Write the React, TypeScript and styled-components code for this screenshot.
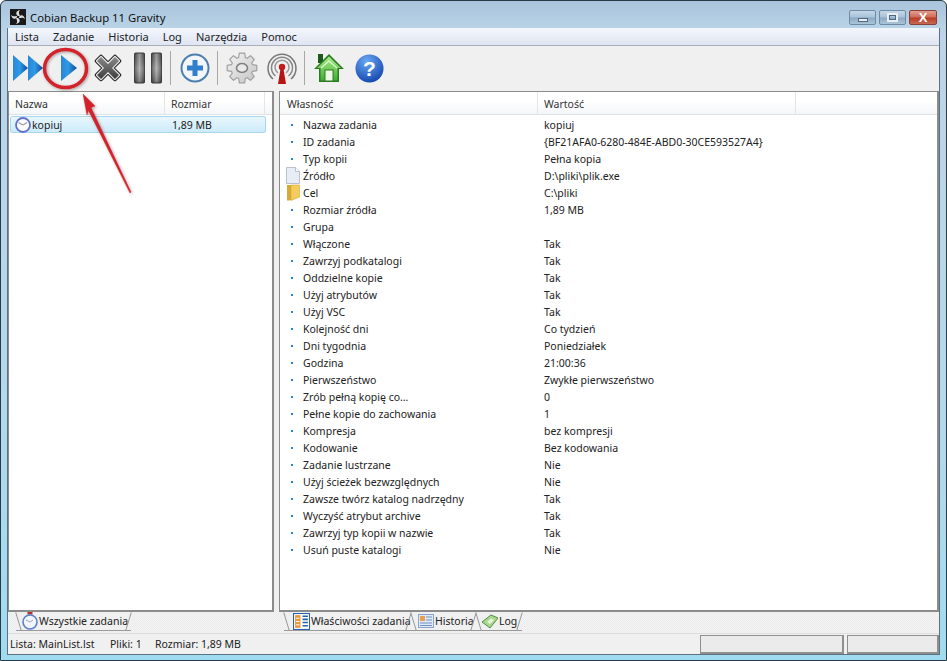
import React from 'react';
import styled, { createGlobalStyle } from 'styled-components';

const GlobalStyle = createGlobalStyle`
  html, body { margin: 0; padding: 0; height: 100%; background: #fff; }
  #root { height: 100%; }
  * { box-sizing: border-box; }
`;

type Row = { name: string; value: string; icon?: 'file' | 'folder' };

const rows: Row[] = [
  { name: 'Nazwa zadania', value: 'kopiuj' },
  { name: 'ID zadania', value: '{BF21AFA0-6280-484E-ABD0-30CE593527A4}' },
  { name: 'Typ kopii', value: 'Pełna kopia' },
  { name: 'Źródło', value: 'D:\\pliki\\plik.exe', icon: 'file' },
  { name: 'Cel', value: 'C:\\pliki', icon: 'folder' },
  { name: 'Rozmiar źródła', value: '1,89 MB' },
  { name: 'Grupa', value: '' },
  { name: 'Włączone', value: 'Tak' },
  { name: 'Zawrzyj podkatalogi', value: 'Tak' },
  { name: 'Oddzielne kopie', value: 'Tak' },
  { name: 'Użyj atrybutów', value: 'Tak' },
  { name: 'Użyj VSC', value: 'Tak' },
  { name: 'Kolejność dni', value: 'Co tydzień' },
  { name: 'Dni tygodnia', value: 'Poniedziałek' },
  { name: 'Godzina', value: '21:00:36' },
  { name: 'Pierwszeństwo', value: 'Zwykłe pierwszeństwo' },
  { name: 'Zrób pełną kopię co…', value: '0' },
  { name: 'Pełne kopie do zachowania', value: '1' },
  { name: 'Kompresja', value: 'bez kompresji' },
  { name: 'Kodowanie', value: 'Bez kodowania' },
  { name: 'Zadanie lustrzane', value: 'Nie' },
  { name: 'Użyj ścieżek bezwzględnych', value: 'Nie' },
  { name: 'Zawsze twórz katalog nadrzędny', value: 'Tak' },
  { name: 'Wyczyść atrybut archive', value: 'Tak' },
  { name: 'Zawrzyj typ kopii w nazwie', value: 'Tak' },
  { name: 'Usuń puste katalogi', value: 'Nie' },
];

const menuItems = ['Lista', 'Zadanie', 'Historia', 'Log', 'Narzędzia', 'Pomoc'];

const Frame = styled.div`
  position: relative;
  width: 947px;
  height: 661px;
  display: flex;
  flex-direction: column;
  overflow: hidden;
  border: 1px solid #2a3a44;
  border-radius: 6px 6px 0 0;
  background: linear-gradient(180deg, #a9c4dc 0%, #bcd5e8 5%, #b4d8ec 60%, #9fdcf0 100%);
  font-family: 'Noto Sans', 'DejaVu Sans', sans-serif;
  font-size: 10.5px;
  color: #222;
`;

const TitleBar = styled.div`
  height: 27px;
  flex: none;
  display: flex;
  align-items: center;
  padding: 4px 9px 0 9px;
`;

const TitleText = styled.span`
  margin: 1px 0 0 4px;
  font-size: 11.3px;
  color: #111;
  flex: 1;
`;

const WinButtons = styled.div`
  display: flex;
  gap: 3px;
  margin-top: 2px;
`;

const WinButton = styled.div<{ $close?: boolean }>`
  width: ${(p) => (p.$close ? 28 : 27)}px;
  height: 15px;
  display: flex;
  align-items: center;
  justify-content: center;
  border: 1px solid ${(p) => (p.$close ? '#8a4038' : '#6f8ba3')};
  border-radius: 2px;
  background: ${(p) =>
    p.$close
      ? 'linear-gradient(180deg, #e0a090 0%, #cf6a58 48%, #b83a28 52%, #c86a50 100%)'
      : 'linear-gradient(180deg, #c4d8e8 0%, #a8c2d8 48%, #8aa8c2 52%, #a9c6d8 100%)'};
`;

const MinGlyph = styled.span`
  width: 10px;
  height: 4px;
  margin-top: 4px;
  background: #e8eef4;
  border: 1px solid #51677c;
`;

const MaxGlyph = styled.span`
  width: 11px;
  height: 9px;
  background: transparent;
  border: 2px solid #e8eef4;
  outline: 1px solid #51677c;
  outline-offset: -3px;
`;

const CloseGlyph = styled.span`
  color: #fff;
  font-family: 'Liberation Sans', sans-serif;
  font-weight: bold;
  font-size: 13px;
  line-height: 13px;
`;

const Body = styled.div`
  flex: 1;
  min-height: 0;
  margin: 0 6px 5px 6px;
  display: flex;
  flex-direction: column;
  background: #f0f0f0;
  border: 1px solid #5e7182;
  border-width: 0 1px 1px 1px;
`;

const MenuBar = styled.div`
  height: 18px;
  flex: none;
  display: flex;
  align-items: center;
  padding-left: 7px;
  gap: 14px;
  font-size: 11px;
  background: linear-gradient(180deg, #f3f6fc 0%, #dfe5f2 100%);
  border-bottom: 1px solid #a9aeb8;
`;

const Toolbar = styled.div`
  height: 44px;
  flex: none;
  display: flex;
  align-items: center;
`;

const ToolSlot = styled.div`
  width: 40px;
  display: flex;
  justify-content: center;
  align-items: center;
`;

const ToolSep = styled.div`
  width: 1px;
  height: 34px;
  margin: 0 4px 0 2px;
  background: #a8a8a8;
`;

const Panels = styled.div`
  flex: 1;
  min-height: 0;
  display: flex;
  gap: 5px;
  margin-top: 1px;
`;

const Panel = styled.div<{ $w?: number }>`
  ${(p) => (p.$w ? `width: ${p.$w}px; flex: none;` : 'flex: 1;')}
  background: #fff;
  border-style: solid;
  border-width: 1px 2px 2px 1px;
  border-color: #8c8c8c;
  overflow: hidden;
`;

const HeaderRow = styled.div`
  height: 23px;
  display: flex;
  align-items: center;
  border-bottom: 1px solid #dfe3e8;
  background: linear-gradient(180deg, #fff 0%, #fff 40%, #f4f6f8 100%);
  color: #333;
`;

const HeaderCell = styled.div<{ $w: number; $pad: number }>`
  width: ${(p) => p.$w}px;
  flex: none;
  height: 100%;
  display: flex;
  align-items: center;
  padding: 2px 0 0 ${(p) => p.$pad}px;
  border-right: 1px solid #e2e5e9;
`;

const TaskRow = styled.div`
  display: flex;
  align-items: center;
  height: 17px;
  margin: 1px 6px 0 1px;
  border: 1px solid #a9d8ee;
  border-radius: 2px;
  background: linear-gradient(180deg, #e8f6fd 0%, #cdebfa 100%);
`;

const TaskIcon = styled.span`
  display: flex;
  margin-left: 4px;
`;

const TaskName = styled.span`
  width: 140px;
  margin-left: 1px;
`;

const PropList = styled.div`
  padding-top: 1px;
`;

const PropRow = styled.div`
  display: flex;
  align-items: center;
  height: 17px;
`;

const PropIcon = styled.div`
  width: 23px;
  flex: none;
  display: flex;
  justify-content: center;
  padding-left: 3px;
`;

const Bullet = styled.span`
  width: 2px;
  height: 2px;
  margin-right: 3px;
  background: #1f86c8;
`;

const PropName = styled.div`
  width: 241px;
  flex: none;
`;

const TabBar = styled.div`
  height: 20px;
  flex: none;
  display: flex;
  background: repeating-conic-gradient(#f4f4f4 0% 25%, #ebebeb 0% 50%) 0 0 / 2px 2px;
`;

const TabGroup = styled.div<{ $w?: number; $pad: number }>`
  ${(p) => (p.$w ? `width: ${p.$w}px; flex: none;` : 'flex: 1;')}
  display: flex;
  padding-left: ${(p) => p.$pad}px;
`;

const Tab = styled.div<{ $w: number; $pad: number }>`
  position: relative;
  width: ${(p) => p.$w}px;
  height: 19px;
  display: flex;
  align-items: center;
  gap: 1px;
  padding-left: ${(p) => p.$pad}px;
  white-space: nowrap;
  border-bottom: 1px solid #9a9a9a;
  background: #f0f0f0;
  &::before, &::after {
    content: '';
    position: absolute;
    top: 0;
    bottom: -1px;
    width: 1px;
    background: #9a9a9a;
  }
  &::before { left: 2px; transform: rotate(-17deg); }
  &::after { right: 2px; transform: rotate(17deg); }
`;

const StatusBar = styled.div`
  height: 21px;
  flex: none;
  margin-top: 1px;
  display: flex;
  align-items: center;
  padding-left: 2px;
  background: #f0f0f0;
  border-top: 1px solid #dcdcdc;
`;

const StatusText = styled.span<{ $w: number }>`
  width: ${(p) => p.$w}px;
  flex: none;
`;

const StatusCell = styled.div<{ $w: number; $gap?: number }>`
  width: ${(p) => p.$w}px;
  flex: none;
  height: 19px;
  margin-right: ${(p) => p.$gap ?? 0}px;
  background: #ebebeb;
  border: 1px solid #8f8f8f;
  border-right-width: 2px;
  border-bottom-width: 2px;
`;

const Annotation = styled.svg`
  position: absolute;
  left: -1px;
  top: -1px;
  pointer-events: none;
`;

const AppIcon = () => (
  <svg width="16" height="16" viewBox="0 0 16 16">
    <rect width="16" height="16" fill="#1a1a1a" />
    <path d="M8 7C5 5 6 2 10 1C8 3 9 5 10 7ZM9 8C11 5 14 6 15 10C13 8 11 9 9 9ZM8 9C11 11 10 14 6 15C8 13 7 11 6 9ZM7 8C5 11 2 10 1 6C3 8 5 7 7 7Z" fill="#e0e0e0" />
  </svg>
);

const FastIcon = () => (
  <svg width="30" height="28" viewBox="0 0 30 28">
    <defs>
      <linearGradient id="playFill" x1="0" y1="0" x2="1" y2="0">
        <stop offset="0" stopColor="#2a86d8" />
        <stop offset="0.45" stopColor="#2f9ae6" />
        <stop offset="1" stopColor="#0d4a98" />
      </linearGradient>
    </defs>
    <path d="M0 1L15 14L0 27Z" fill="url(#playFill)" />
    <path d="M15 1L30 14L15 27Z" fill="url(#playFill)" />
  </svg>
);

const PlayIcon = () => (
  <svg width="18" height="28" viewBox="0 0 18 28">
    <path d="M2 1L18 14L2 27Z" fill="url(#playFill)" />
  </svg>
);

const X_SHAPE = 'M7 3L14 10L21 3L25 7L18 14L25 21L21 25L14 18L7 25L3 21L10 14L3 7Z';

const StopIcon = () => (
  <svg width="28" height="28" viewBox="0 0 28 28" strokeLinejoin="round">
    <defs>
      <linearGradient id="xFill" x1="0" y1="0" x2="0" y2="1">
        <stop offset="0" stopColor="#8a8a8a" />
        <stop offset="1" stopColor="#3c3c3c" />
      </linearGradient>
    </defs>
    <path d={X_SHAPE} fill="#2c2c2c" stroke="#2c2c2c" strokeWidth="4.5" />
    <path d={X_SHAPE} fill="#f0f0f0" stroke="#f0f0f0" strokeWidth="2.2" />
    <path d={X_SHAPE} fill="url(#xFill)" />
  </svg>
);

const PauseIcon = () => (
  <svg width="29" height="32" viewBox="0 0 29 32">
    <defs>
      <linearGradient id="barFill" x1="0" y1="0" x2="1" y2="0">
        <stop offset="0" stopColor="#4a4a4a" />
        <stop offset="0.5" stopColor="#a8a8a8" />
        <stop offset="1" stopColor="#4a4a4a" />
      </linearGradient>
      <linearGradient id="barShade" x1="0" y1="0" x2="0" y2="1">
        <stop offset="0" stopColor="#000" stopOpacity=".1" />
        <stop offset=".5" stopColor="#fff" stopOpacity=".15" />
        <stop offset="1" stopColor="#000" stopOpacity=".25" />
      </linearGradient>
    </defs>
    <rect x=".5" y="1" width="10" height="30" rx="1" fill="url(#barFill)" stroke="#3c3c3c" />
    <rect x=".5" y="1" width="10" height="30" rx="1" fill="url(#barShade)" />
    <rect x="17.500" y="1" width="10" height="30" rx="1" fill="url(#barFill)" stroke="#3c3c3c" />
    <rect x="17.500" y="1" width="10" height="30" rx="1" fill="url(#barShade)" />
  </svg>
);

const PlusIcon = () => (
  <svg width="30" height="30" viewBox="0 0 30 30">
    <circle cx="15" cy="15" r="13.5" fill="#f2f6fa" stroke="#4d7fae" strokeWidth="2" />
    <path d="M12.5 7H17.5V12.5H23V17.5H17.5V23H12.5V17.5H7V12.5H12.5Z" fill="#2f7fcc" />
  </svg>
);

// 8 toothed cog outline, computed so the teeth stay even
const gearPath = (() => {
  const pts: string[] = [];
  for (let i = 0; i < 8; i++) {
    const a = (i * Math.PI) / 4;
    [[-0.3, 11], [-0.18, 15], [0.18, 15], [0.3, 11]].forEach(([da, r]) => {
      pts.push(`${(16 + r * Math.cos(a + da)).toFixed(1)} ${(16 + r * Math.sin(a + da)).toFixed(1)}`);
    });
  }
  return `M${pts.join('L')}Z`;
})();

const GearIcon = () => (
  <svg width="32" height="32" viewBox="0 0 32 32">
    <defs>
      <linearGradient id="gearFill" x1="0" y1="0" x2="1" y2="1">
        <stop offset="0" stopColor="#f4f4f4" />
        <stop offset="1" stopColor="#c4c4c4" />
      </linearGradient>
    </defs>
    <path d={gearPath} fill="url(#gearFill)" stroke="#a0a0a0" strokeWidth="1.2" strokeLinejoin="round" />
    <ellipse cx="16" cy="16" rx="5.500" ry="4.500" fill="#e8e8e8" stroke="#808080" strokeWidth="1.600" />
  </svg>
);

const RadioIcon = () => (
  <svg width="32" height="32" viewBox="0 0 32 32" fill="none">
    <path d="M7 27A14 14 0 1 1 25 27" stroke="#777" strokeWidth="1.500" />
    <path d="M9.500 24A10.500 10.500 0 1 1 22.500 24" stroke="#888" strokeWidth="1.500" />
    <path d="M12 21A7 7 0 1 1 20 21" stroke="#999" strokeWidth="1.500" />
    <circle cx="16" cy="15" r="3.200" fill="#c81818" />
    <path d="M14.500 17H17.500L20 32H12Z" fill="#b81414" />
  </svg>
);

const HomeIcon = () => (
  <svg width="32" height="32" viewBox="0 0 32 32">
    <defs>
      <linearGradient id="roofFill" x1="0" y1="0" x2="0" y2="1">
        <stop offset="0" stopColor="#a8ec88" />
        <stop offset="1" stopColor="#3fb030" />
      </linearGradient>
    </defs>
    <rect x="5" y="2" width="5" height="9" fill="#1e5a1e" />
    <path d="M16 2L31 17H26V30H6V17H1Z" fill="#2c7a24" strokeLinejoin="round" />
    <path d="M16 4.500L28 16H24.500V28.500H7.500V16H4Z" fill="url(#roofFill)" />
    <rect x="12" y="18" width="8" height="11" fill="#eefae8" stroke="#2c7a24" />
    <path d="M8 16L16 9L24 16" fill="none" stroke="#e4f8d8" strokeWidth="1.200" />
  </svg>
);

const HelpIcon = () => (
  <svg width="29" height="29" viewBox="0 0 29 29">
    <defs>
      <radialGradient id="helpFill" cx="0.4" cy="0.25" r="0.85">
        <stop offset="0" stopColor="#6aa8f4" />
        <stop offset="1" stopColor="#0c3ea8" />
      </radialGradient>
    </defs>
    <circle cx="14.500" cy="14.500" r="14" fill="url(#helpFill)" />
    <text x="14.500" y="22" textAnchor="middle" fill="#fff" fontFamily="'Liberation Sans', sans-serif" fontWeight="bold" fontSize="21">?</text>
  </svg>
);

const ClockIcon = () => (
  <svg width="16" height="16" viewBox="0 0 16 16">
    <circle cx="8" cy="8" r="7" fill="#fbfbfe" stroke="#6270cc" strokeWidth="1.800" />
    <path d="M8 8L3.500 5.500M8 8L12 5.500" stroke="#9a9ab0" strokeWidth="1.200" fill="none" />
  </svg>
);

const StopwatchIcon = () => (
  <svg width="16" height="18" viewBox="0 0 16 18">
    <rect x="5.500" y="0" width="5" height="2.500" fill="#b83030" />
    <circle cx="8" cy="10" r="7" fill="#f2f5fc" stroke="#5a82c8" strokeWidth="1.600" />
    <path d="M8 10L4 8M8 10L11 8" stroke="#9ab" strokeWidth="1" fill="none" />
  </svg>
);

const FileIcon = () => (
  <svg width="14" height="17" viewBox="0 0 14 17">
    <path d="M.5 .5H9.500L13.500 4.500V16.500H.5Z" fill="#e6edf6" stroke="#b8c0cc" />
    <path d="M9.500 .5V4.500H13.500" fill="#fff" stroke="#b8c0cc" />
  </svg>
);

const FolderIcon = () => (
  <svg width="13" height="17" viewBox="0 0 13 17">
    <path d="M0 1H6V14L3 16.500H0Z" fill="#d8a838" />
    <path d="M4 1H12.500V13L4 16.500Z" fill="#f4cc5c" stroke="#d8a838" strokeWidth=".6" />
  </svg>
);

const PropsTabIcon = () => (
  <svg width="17" height="17" viewBox="0 0 16 16">
    <rect x=".5" y=".5" width="15" height="15" fill="#fff" stroke="#2a5fb0" />
    <rect x="2" y="2" width="5" height="12" fill="#e89838" />
    <path d="M9 3H14M9 6H14M9 9H14M9 12H14" stroke="#2a5fb0" strokeWidth="1.500" />
    <path d="M3 5H6M3 8H6M3 11H6" stroke="#fff" />
  </svg>
);

const HistoryTabIcon = () => (
  <svg width="16" height="14" viewBox="0 0 16 14">
    <rect x=".5" y=".5" width="15" height="13" fill="#dfeaf8" stroke="#8aa4c8" />
    <rect x="2" y="2" width="5" height="5" fill="#e8a050" />
    <path d="M8 3H14M8 6H14M2 9H14M2 11.500H14" stroke="#6f8fc0" />
  </svg>
);

const LogTabIcon = () => (
  <svg width="16" height="15" viewBox="0 0 16 15">
    <path d="M0 8L9 1L16 4L8 14Z" fill="#a8d890" stroke="#4f8f48" />
    <path d="M5 8L9 4.500L12 6L8 10Z" fill="#e8f4d8" />
  </svg>
);

const App: React.FC = () => {
  return (
    <Frame>
      <GlobalStyle />
      <TitleBar>
        <AppIcon />
        <TitleText>Cobian Backup 11 Gravity</TitleText>
        <WinButtons>
          <WinButton><MinGlyph /></WinButton>
          <WinButton><MaxGlyph /></WinButton>
          <WinButton $close><CloseGlyph>X</CloseGlyph></WinButton>
        </WinButtons>
      </TitleBar>

      <Body>
        <MenuBar>
          {menuItems.map((m) => <span key={m}>{m}</span>)}
        </MenuBar>

        <Toolbar>
          <ToolSlot><FastIcon /></ToolSlot>
          <ToolSlot><PlayIcon /></ToolSlot>
          <ToolSlot><StopIcon /></ToolSlot>
          <ToolSlot><PauseIcon /></ToolSlot>
          <ToolSep />
          <ToolSlot><PlusIcon /></ToolSlot>
          <ToolSep />
          <ToolSlot><GearIcon /></ToolSlot>
          <ToolSlot><RadioIcon /></ToolSlot>
          <ToolSep />
          <ToolSlot><HomeIcon /></ToolSlot>
          <ToolSlot><HelpIcon /></ToolSlot>
        </Toolbar>

        <Panels>
          <Panel $w={266}>
            <HeaderRow>
              <HeaderCell $w={156} $pad={6}>Nazwa</HeaderCell>
              <HeaderCell $w={100} $pad={6}>Rozmiar</HeaderCell>
            </HeaderRow>
            <TaskRow>
              <TaskIcon><ClockIcon /></TaskIcon>
              <TaskName>kopiuj</TaskName>
              <span>1,89 MB</span>
            </TaskRow>
          </Panel>
          <Panel>
            <HeaderRow>
              <HeaderCell $w={258} $pad={7}>Własność</HeaderCell>
              <HeaderCell $w={258} $pad={6}>Wartość</HeaderCell>
            </HeaderRow>
            <PropList>
              {rows.map((r) => (
                <PropRow key={r.name}>
                  <PropIcon>
                    {r.icon === 'file' && <FileIcon />}
                    {r.icon === 'folder' && <FolderIcon />}
                    {!r.icon && <Bullet />}
                  </PropIcon>
                  <PropName>{r.name}</PropName>
                  <span>{r.value}</span>
                </PropRow>
              ))}
            </PropList>
          </Panel>
        </Panels>

        <TabBar>
          <TabGroup $w={271} $pad={8}>
            <Tab $w={115} $pad={6}><StopwatchIcon />Wszystkie zadania</Tab>
          </TabGroup>
          <TabGroup $pad={5}>
            <Tab $w={127} $pad={9}><PropsTabIcon />Właściwości zadania</Tab>
            <Tab $w={65} $pad={7}><HistoryTabIcon />Historia</Tab>
            <Tab $w={46} $pad={6}><LogTabIcon />Log</Tab>
          </TabGroup>
        </TabBar>

        <StatusBar>
          <StatusText $w={100}>Lista: MainList.lst</StatusText>
          <StatusText $w={45}>Pliki: 1</StatusText>
          <StatusText $w={545}>Rozmiar: 1,89 MB</StatusText>
          <StatusCell $w={144} $gap={3} />
          <StatusCell $w={92} />
        </StatusBar>
      </Body>

      <Annotation width="947" height="661" viewBox="0 0 947 661">
        <defs>
          <filter id="annShadow" x="-20%" y="-20%" width="140%" height="140%">
            <feDropShadow dx="1" dy="1" stdDeviation="1.500" floodColor="#000" floodOpacity=".35" />
          </filter>
        </defs>
        <g filter="url(#annShadow)" fill="#d2202a">
          <ellipse cx="65.500" cy="68.500" rx="21" ry="19" fill="none" stroke="#d2202a" strokeWidth="3.500" />
          <path d="M83 94L95 106L91 107.500L131 192L130 193L88.500 110.500L87 115Z" stroke="#d2202a" strokeWidth=".4" strokeLinejoin="round" />
        </g>
      </Annotation>
    </Frame>
  );
};

export default App;
